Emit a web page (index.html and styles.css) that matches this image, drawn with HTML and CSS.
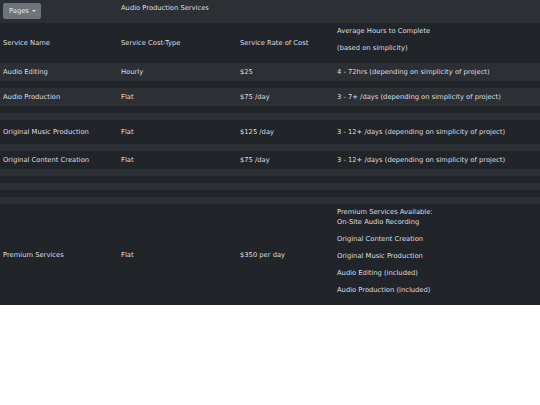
FILE: index.html
```html
<!DOCTYPE html>
<html lang="en">
<head>
    <meta charset="UTF-8">
    <meta name="viewport" content="width=device-width, initial-scale=1.0">
    <title>Audio Production Services</title>
    <link rel="stylesheet" href="styles.css">
</head>
<body>
    <table class="services-table">
        <colgroup>
            <col class="col-name">
            <col class="col-type">
            <col class="col-rate">
            <col class="col-hours">
        </colgroup>
        <tbody>
            <tr class="row-top">
                <td>
                    <button type="button" class="btn-pages">Pages <span class="caret"></span></button>
                </td>
                <td>Audio Production Services</td>
                <td></td>
                <td></td>
            </tr>
            <tr class="row-head">
                <td>Service Name</td>
                <td>Service Cost-Type</td>
                <td>Service Rate of Cost</td>
                <td>
                    <p>Average Hours to Complete</p>
                    <p>(based on simplicity)</p>
                </td>
            </tr>
            <tr class="row-text">
                <td>Audio Editing</td>
                <td>Hourly</td>
                <td>$25</td>
                <td>4 - 72hrs (depending on simplicity of project)</td>
            </tr>
            <tr class="row-empty"><td></td><td></td><td></td><td></td></tr>
            <tr class="row-text">
                <td>Audio Production</td>
                <td>Flat</td>
                <td>$75 /day</td>
                <td>3 - 7+ /days (depending on simplicity of project)</td>
            </tr>
            <tr class="row-empty"><td></td><td></td><td></td><td></td></tr>
            <tr class="row-empty"><td></td><td></td><td></td><td></td></tr>
            <tr class="row-text row-tall">
                <td>Original Music Production</td>
                <td>Flat</td>
                <td>$125 /day</td>
                <td>3 - 12+ /days (depending on simplicity of project)</td>
            </tr>
            <tr class="row-empty"><td></td><td></td><td></td><td></td></tr>
            <tr class="row-text">
                <td>Original Content Creation</td>
                <td>Flat</td>
                <td>$75 /day</td>
                <td>3 - 12+ /days (depending on simplicity of project)</td>
            </tr>
            <tr class="row-empty"><td></td><td></td><td></td><td></td></tr>
            <tr class="row-empty"><td></td><td></td><td></td><td></td></tr>
            <tr class="row-empty"><td></td><td></td><td></td><td></td></tr>
            <tr class="row-empty"><td></td><td></td><td></td><td></td></tr>
            <tr class="row-empty"><td></td><td></td><td></td><td></td></tr>
            <tr class="row-premium">
                <td>Premium Services</td>
                <td>Flat</td>
                <td>$350 per day</td>
                <td>
                    <p>Premium Services Available:<br>On-Site Audio Recording</p>
                    <p>Original Content Creation</p>
                    <p>Original Music Production</p>
                    <p>Audio Editing (included)</p>
                    <p>Audio Production (included)</p>
                </td>
            </tr>
        </tbody>
    </table>
</body>
</html>
```

FILE: styles.css
```css
:root {
    --table-bg: #212529;
    --stripe-bg: #2c3034;
    --text-color: #dcdee0;
    --btn-bg: #6c757d;
}

body {
    margin: 0;
    background-color: #fff;
    font-family: "DejaVu Sans", Verdana, sans-serif;
    font-size: 6.75px;
    line-height: 10px;
}

.services-table {
    width: 100%;
    border-collapse: collapse;
    table-layout: fixed;
    background-color: var(--table-bg);
    color: var(--text-color);
}

.col-name { width: 118px; }
.col-type { width: 119px; }
.col-rate { width: 97px; }

.services-table td {
    padding: 3px 3px;
    vertical-align: middle;
    text-align: left;
}

.services-table p {
    margin: 0 0 7px;
}

/* striped rows */
.services-table tr:nth-child(odd) {
    background-color: var(--stripe-bg);
}

.row-top {
    height: 23px;
}

.row-top td {
    vertical-align: top;
}

.row-text {
    height: 18px;
}

.row-tall {
    height: 24px;
}

.row-empty {
    height: 7px;
}

.row-empty td {
    padding: 0;
}

.btn-pages {
    display: inline-flex;
    align-items: center;
    gap: 2px;
    height: 16px;
    padding: 0 4px 0 5px;
    border: 1px solid var(--btn-bg);
    border-radius: 2px;
    background-color: var(--btn-bg);
    color: #e4e6e8;
    font-family: inherit;
    font-size: 6.75px;
    line-height: 10px;
    cursor: pointer;
}

.caret {
    display: inline-block;
    width: 0;
    height: 0;
    margin-left: 1px;
    border-top: 2px solid #e4e6e8;
    border-left: 2px solid transparent;
    border-right: 2px solid transparent;
}
```
